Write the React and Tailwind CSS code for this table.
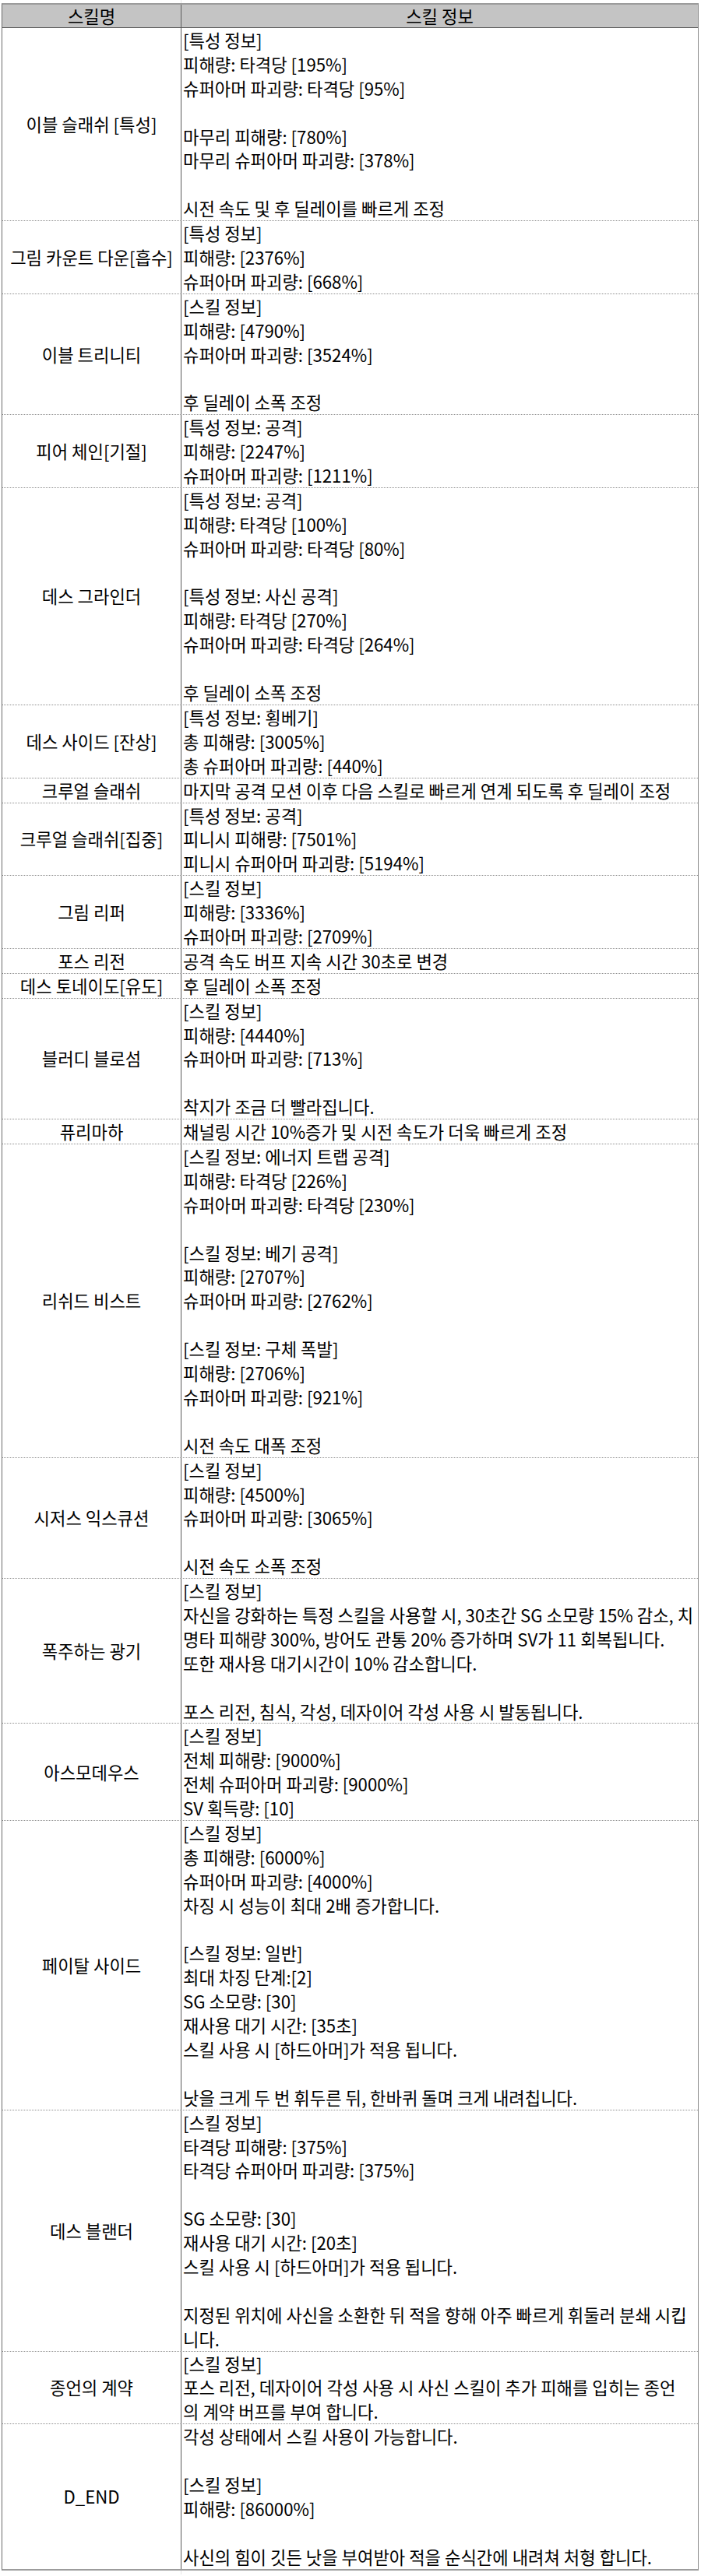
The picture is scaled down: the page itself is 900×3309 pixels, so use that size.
import React from "react";

const rows = [
  ["이블 슬래쉬 [특성]", ["[특성 정보]", "피해량: 타격당 [195%]", "슈퍼아머 파괴량: 타격당 [95%]", "", "마무리 피해량: [780%]", "마무리 슈퍼아머 파괴량: [378%]", "", "시전 속도 및 후 딜레이를 빠르게 조정"]],
  ["그림 카운트 다운[흡수]", ["[특성 정보]", "피해량: [2376%]", "슈퍼아머 파괴량: [668%]"]],
  ["이블 트리니티", ["[스킬 정보]", "피해량: [4790%]", "슈퍼아머 파괴량: [3524%]", "", "후 딜레이 소폭 조정"]],
  ["피어 체인[기절]", ["[특성 정보: 공격]", "피해량: [2247%]", "슈퍼아머 파괴량: [1211%]"]],
  ["데스 그라인더", ["[특성 정보: 공격]", "피해량: 타격당 [100%]", "슈퍼아머 파괴량: 타격당 [80%]", "", "[특성 정보: 사신 공격]", "피해량: 타격당 [270%]", "슈퍼아머 파괴량: 타격당 [264%]", "", "후 딜레이 소폭 조정"]],
  ["데스 사이드 [잔상]", ["[특성 정보: 횡베기]", "총 피해량: [3005%]", "총 슈퍼아머 파괴량: [440%]"]],
  ["크루얼 슬래쉬", ["마지막 공격 모션 이후 다음 스킬로 빠르게 연계 되도록 후 딜레이 조정"]],
  ["크루얼 슬래쉬[집중]", ["[특성 정보: 공격]", "피니시 피해량: [7501%]", "피니시 슈퍼아머 파괴량: [5194%]"]],
  ["그림 리퍼", ["[스킬 정보]", "피해량: [3336%]", "슈퍼아머 파괴량: [2709%]"]],
  ["포스 리전", ["공격 속도 버프 지속 시간 30초로 변경"]],
  ["데스 토네이도[유도]", ["후 딜레이 소폭 조정"]],
  ["블러디 블로섬", ["[스킬 정보]", "피해량: [4440%]", "슈퍼아머 파괴량: [713%]", "", "착지가 조금 더 빨라집니다."]],
  ["퓨리마하", ["채널링 시간 10%증가 및 시전 속도가 더욱 빠르게 조정"]],
  ["리쉬드 비스트", ["[스킬 정보: 에너지 트랩 공격]", "피해량: 타격당 [226%]", "슈퍼아머 파괴량: 타격당 [230%]", "", "[스킬 정보: 베기 공격]", "피해량: [2707%]", "슈퍼아머 파괴량: [2762%]", "", "[스킬 정보: 구체 폭발]", "피해량: [2706%]", "슈퍼아머 파괴량: [921%]", "", "시전 속도 대폭 조정"]],
  ["시저스 익스큐션", ["[스킬 정보]", "피해량: [4500%]", "슈퍼아머 파괴량: [3065%]", "", "시전 속도 소폭 조정"]],
  ["폭주하는 광기", ["[스킬 정보]", "자신을 강화하는 특정 스킬을 사용할 시, 30초간 SG 소모량 15% 감소, 치", "명타 피해량 300%, 방어도 관통 20% 증가하며 SV가 11 회복됩니다.", "또한 재사용 대기시간이 10% 감소합니다.", "", "포스 리전, 침식, 각성, 데자이어 각성 사용 시 발동됩니다."]],
  ["아스모데우스", ["[스킬 정보]", "전체 피해량: [9000%]", "전체 슈퍼아머 파괴량: [9000%]", "SV 획득량: [10]"]],
  ["페이탈 사이드", ["[스킬 정보]", "총 피해량: [6000%]", "슈퍼아머 파괴량: [4000%]", "차징 시 성능이 최대 2배 증가합니다.", "", "[스킬 정보: 일반]", "최대 차징 단계:[2]", "SG 소모량: [30]", "재사용 대기 시간: [35초]", "스킬 사용 시 [하드아머]가 적용 됩니다.", "", "낫을 크게 두 번 휘두른 뒤, 한바퀴 돌며 크게 내려칩니다."]],
  ["데스 블랜더", ["[스킬 정보]", "타격당 피해량: [375%]", "타격당 슈퍼아머 파괴량: [375%]", "", "SG 소모량: [30]", "재사용 대기 시간: [20초]", "스킬 사용 시 [하드아머]가 적용 됩니다.", "", "지정된 위치에 사신을 소환한 뒤 적을 향해 아주 빠르게 휘둘러 분쇄 시킵", "니다."]],
  ["종언의 계약", ["[스킬 정보]", "포스 리전, 데자이어 각성 사용 시 사신 스킬이 추가 피해를 입히는 종언", "의 계약 버프를 부여 합니다."]],
  ["D_END", ["각성 상태에서 스킬 사용이 가능합니다.", "", "[스킬 정보]", "피해량: [86000%]", "", "사신의 힘이 깃든 낫을 부여받아 적을 순식간에 내려쳐 처형 합니다."]],
];

export default function App() {
  return (
    <div
      className="w-[900px] h-[3309px] bg-white text-black text-[22.2px]"
      style={{ fontFamily: '"Noto Sans CJK KR", "Noto Sans", sans-serif' }}
    >
      <div className="h-[4px] flex">
        <div className="w-[232px]" />
        <div className="w-px bg-[#e6e6e6]" />
      </div>
      <div className="ml-[2px] w-[895px] border-t-2 border-b-2 border-t-[#9c9c9c] border-b-[#9c9c9c] border-l border-l-[#6b6b6b] border-r border-r-[#8a8a8a]">
        <div className="grid grid-cols-[230px_1fr] bg-[#c4c4c4] border-b border-b-[#5a5a5a]">
          <div className="text-center leading-[29px] border-r border-r-[#5a5a5a]">스킬명</div>
          <div className="text-center leading-[29px]">스킬 정보</div>
        </div>
        {rows.map(([name, lines], i) => (
          <div
            key={i}
            className={
              i === rows.length - 1
                ? "grid grid-cols-[230px_1fr]"
                : "grid grid-cols-[230px_1fr] border-b border-dotted border-b-[#8f8f8f]"
            }
          >
            <div className="flex items-center justify-center text-center leading-[30.9px] border-r border-r-[#5a5a5a] whitespace-nowrap">
              {name}
            </div>
            <div className="pl-[2px] leading-[30.9px] whitespace-nowrap overflow-hidden">
              {lines.map((l, j) => (
                <div key={j} className="h-[30.9px]">
                  {l === "" ? "\u00a0" : l}
                </div>
              ))}
            </div>
          </div>
        ))}
      </div>
      <div className="h-[5px] flex">
        <div className="w-[232px]" />
        <div className="w-px bg-[#e6e6e6]" />
      </div>
    </div>
  );
}
